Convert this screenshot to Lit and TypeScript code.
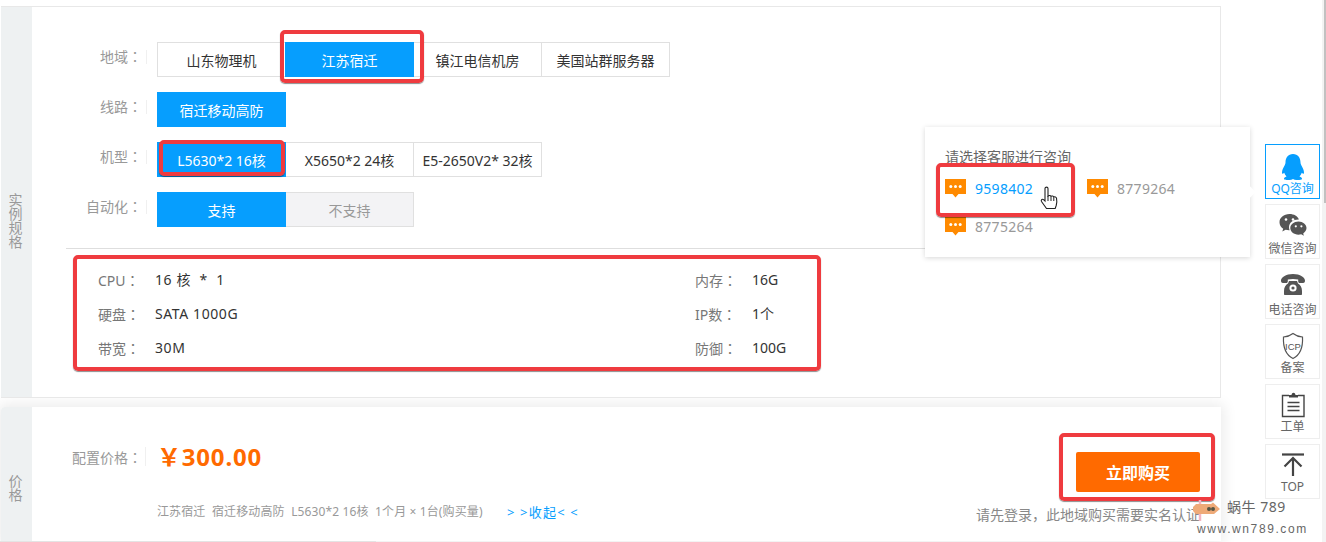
import { LitElement, html, css, svg } from 'lit';
import { customElement } from 'lit/decorators.js';
import { classMap } from 'lit/directives/class-map.js';

type Option = { label: string; on?: boolean; off?: boolean };

const ROWS: { label: string; options: Option[] }[] = [
  {
    label: '地域',
    options: [{ label: '山东物理机' }, { label: '江苏宿迁', on: true }, { label: '镇江电信机房' }, { label: '美国站群服务器' }]
  },
  { label: '线路', options: [{ label: '宿迁移动高防', on: true }] },
  {
    label: '机型',
    options: [{ label: 'L5630*2 16核', on: true }, { label: 'X5650*2 24核' }, { label: 'E5-2650V2* 32核' }]
  },
  { label: '自动化', options: [{ label: '支持', on: true }, { label: '不支持', off: true }] }
];

const SPECS = [
  ['CPU', '16 核  *  1', '内存', '16G'],
  ['硬盘', 'SATA 1000G', 'IP数', '1个'],
  ['带宽', '30M', '防御', '100G']
];

const ICONS = {
  qq: svg`<path d="M15 2c-5 0-7.500 3.800-7.500 8.500 0 1-.2 1.700-.8 2.800C5.200 16 4 18.500 4 20.500c0 1.500.8 1.800 2.200.3.500 1.600 1.300 2.800 2.300 3.700-1.500.6-2.500 1.300-2.500 2.300C6 28 9 28 11.500 28c1.400 0 2.600-.4 3.500-1 .9.600 2.100 1 3.500 1 2.500 0 5.500 0 5.500-1.200 0-1-1-1.700-2.500-2.300 1-.9 1.800-2.100 2.300-3.700 1.400 1.500 2.200 1.200 2.200-.3 0-2-1.200-4.500-2.700-7.200-.6-1.100-.8-1.800-.8-2.800C22.500 5.800 20 2 15 2z" fill="#069efe"/>`,
  wechat: svg`<path d="M11.500 2C5.700 2 1.500 5.700 1.500 10.300c0 2.700 1.400 4.900 3.700 6.400l-.9 2.900 3.300-1.800c1.100.3 2.200.5 3.400.5h.6c-.4-1-.6-2-.6-3 0-4.500 4-7.800 9.300-7.800h.6C19.700 4.200 16 2 11.500 2z" fill="#555"/><path d="M20.500 9.500c-4.700 0-8.200 3-8.200 6.600s3.500 6.600 8.200 6.600c.9 0 1.800-.1 2.700-.4l2.700 1.500-.7-2.400c1.900-1.200 3.300-3.200 3.300-5.300 0-3.600-3.500-6.600-8-6.600z" fill="#555"/><circle cx="8" cy="7.500" r="1.300" fill="#fff"/><circle cx="15" cy="7.500" r="1.300" fill="#fff"/><circle cx="17.800" cy="14.300" r="1.100" fill="#fff"/><circle cx="23.400" cy="14.300" r="1.100" fill="#fff"/>`,
  phone: svg`<path d="M3 9C2.500 5.500 8 2 15 2s12.500 3.500 12 7c-.1 1.200-.8 2-1.800 2h-3.400c-1 0-1.600-.8-1.600-1.800V7.500c-3-.8-7.400-.8-10.400 0v1.700c0 1-.6 1.800-1.600 1.800H4.800C3.800 11 3.100 10.200 3 9z" fill="#555"/><path d="M11 9h8l1 2.500c2.500 1.500 4 4 4 7.500v3c0 .6-.4 1-1 1H7c-.6 0-1-.4-1-1v-3c0-3.500 1.500-6 4-7.500z" fill="#555"/><circle cx="15" cy="16" r="3.600" fill="#fff"/><circle cx="15" cy="16" r="1.600" fill="#555"/>`,
  icp: svg`<path d="M15 1.500c3 2.300 6 3.400 9.500 3.500.5 9.500-1.500 17.500-9.500 21.500C7 22.500 5 14.500 5.500 5 9 4.900 12 3.800 15 1.500z" fill="none" stroke="#555" stroke-width="1.200"/><text x="15" y="17.500" text-anchor="middle" font-size="9.500" fill="#555" font-family="Liberation Sans, sans-serif">ICP</text>`,
  order: svg`<path d="M11 3.500H4.500v21h21.500v-21H20" fill="none" stroke="#444" stroke-width="1.400"/><path d="M11 5.500V3h2.500c.3-1.500 1-2.300 2-2.300s1.700.8 2 2.300H20v2.500z" fill="#444"/><path d="M9.500 10.500h12M9.500 14.500h12M9.500 18.500h12" stroke="#444" stroke-width="1.300"/>`,
  top: svg`<path d="M4 2.500h22" stroke="#444" stroke-width="2.200"/><path d="M15 24V6M6.500 14.500L15 6l8.500 8.500" fill="none" stroke="#444" stroke-width="2.200"/>`
};

const RAIL = [
  { icon: ICONS.qq, label: 'QQ咨询', nudge: 0, active: true },
  { icon: ICONS.wechat, label: '微信咨询', nudge: 0 },
  { icon: ICONS.phone, label: '电话咨询', nudge: 1 },
  { icon: ICONS.icp, label: '备案', nudge: -1 },
  { icon: ICONS.order, label: '工单', nudge: -2 },
  { icon: ICONS.top, label: 'TOP', nudge: -2 }
];

const chat = html`<svg class="chat" width="21" height="19" viewBox="0 0 21 19">
  <path d="M0 0h21v15h-7.500L10.500 18.500 7.500 15H0z" fill="#ff8a00"/>
  <circle cx="5.800" cy="7.500" r="1.500" fill="#fff"/><circle cx="10.500" cy="7.500" r="1.500" fill="#fff"/><circle cx="15.200" cy="7.500" r="1.500" fill="#fff"/>
</svg>`;

const colon = html`<span class="colon">：</span>`;

@customElement('app-root')
export class AppRoot extends LitElement {
  static styles = css`
    :host {
      display: block;
      position: relative;
      width: 1326px;
      height: 542px;
      overflow: hidden;
      background: #fff;
      color: #333;
      font-family: 'Noto Sans', 'Noto Sans CJK SC', sans-serif;
      font-size: 14px;
    }
    .page {
      display: flex;
      height: 542px;
    }
    .main {
      display: flex;
      flex-direction: column;
      width: 1221px;
      flex: none;
    }
    .colon {
      font-family: 'Noto Sans CJK TC', sans-serif;
    }
    .card {
      display: flex;
      margin-left: 1px;
      background: #fff;
    }
    .spec-card {
      height: 392px;
      margin-top: 6px;
      border: 1px solid #e8e8e8;
      border-width: 1px 1px 1px 0;
      box-sizing: border-box;
      margin-bottom: 9px;
      z-index: 1;
    }
    .price-card {
      height: 134px;
      border-top-left-radius: 4px;
      box-shadow: 0 0 14px 3px rgba(0, 0, 0, 0.08);
    }
    .foot {
      width: 376px;
      height: 1px;
      background: #e4e4e4;
      z-index: 1;
    }
    .strip {
      width: 31px;
      flex: none;
      box-sizing: border-box;
      background: #eef1f2;
      color: #999;
      font-size: 14px;
      line-height: 14px;
      text-align: center;
      padding: 0 9px 0 7px;
    }
    .spec-card .strip {
      padding-top: 186px;
    }
    .price-card .strip {
      padding-top: 67px;
      border-top-left-radius: 4px;
    }
    .body {
      flex: 1;
      min-width: 0;
    }
    .spec-card .body {
      padding-top: 35px;
    }
    .row {
      display: flex;
      height: 35px;
      margin-bottom: 15px;
    }
    .label {
      width: 115px;
      box-sizing: border-box;
      text-align: right;
      color: #999;
      padding-right: 5px;
      line-height: 28px;
      flex: none;
      margin-right: 10px;
      background: linear-gradient(#f0f0f0, #f0f0f0) right 8px / 1px 14px no-repeat;
    }
    .options {
      display: flex;
    }
    .opt {
      width: 129px;
      height: 35px;
      box-sizing: border-box;
      border: 1px solid #e0e0e0;
      margin-left: -1px;
      line-height: 35px;
      text-align: center;
      white-space: nowrap;
      background: #fff;
      color: #333;
    }
    .opt:first-child {
      margin-left: 0;
    }
    .opt.on {
      background: #069efe;
      border-color: #069efe;
      color: #fff;
      z-index: 1;
    }
    .opt.off {
      background: #f3f3f5;
      color: #999;
    }
    .divider {
      height: 1px;
      margin: 21px 0 0 34px;
      background: #dedede;
    }
    .specs {
      display: grid;
      grid-template-columns: 57px 540px 57px 1fr;
      grid-auto-rows: 34px;
      padding: 14px 0 0 66px;
      line-height: 34px;
      white-space: pre;
    }
    .specs .k {
      color: #777;
    }
    .specs .wide {
      letter-spacing: 0.6px;
    }
    .price-body {
      padding-top: 33px;
      position: relative;
    }
    .price-row {
      display: flex;
      height: 34px;
      line-height: 34px;
    }
    .price-row .k {
      flex: none;
      box-sizing: border-box;
      width: 114px;
      margin-right: 11px;
      padding-right: 4px;
      text-align: right;
      color: #999;
      background: linear-gradient(#f0f0f0, #f0f0f0) right 7px / 1px 19px no-repeat;
    }
    .price {
      font-size: 24px;
      font-weight: 700;
      color: #ff6a00;
      letter-spacing: 0.8px;
    }
    .summary {
      display: flex;
      margin: 28px 0 0 125px;
      font-size: 12px;
      line-height: 20px;
      color: #999;
      letter-spacing: 0.12px;
      white-space: pre;
    }
    .summary a {
      color: #069efe;
      margin-left: 21px;
      font-size: 13px;
      letter-spacing: 1.2px;
    }
    .buy {
      position: absolute;
      left: 1044px;
      top: 45px;
      width: 124px;
      height: 40px;
      background: #ff6a00;
      border-radius: 2px;
      color: #fff;
      font: 700 16px/40px 'Noto Sans CJK SC', sans-serif;
      text-align: center;
    }
    .hint {
      position: absolute;
      left: 944px;
      top: 98px;
      color: #888;
      line-height: 20px;
      white-space: nowrap;
    }
    .rail {
      display: flex;
      flex-direction: column;
      gap: 5px;
      width: 55px;
      margin: 144px 0 0 44px;
      flex: none;
    }
    .tool {
      width: 55px;
      height: 55px;
      box-sizing: border-box;
      border: 1px solid #eee;
      background: #fff;
      color: #666;
      font-size: 12px;
      line-height: 14px;
      text-align: center;
      padding-top: 7px;
    }
    .tool svg {
      display: block;
      margin: 0 auto;
    }
    .tool.active {
      border-color: #069efe;
      color: #069efe;
    }
    .scroll {
      width: 4px;
      margin-left: 2px;
      flex: none;
      background: #f3f3f3;
    }
    .scroll div {
      height: 203px;
      margin-left: 2px;
      background: #c1c1c1;
    }
    .popup {
      position: absolute;
      z-index: 5;
      left: 925px;
      top: 127px;
      width: 325px;
      height: 130px;
      box-sizing: border-box;
      padding: 20px 20px 0;
      background: #fff;
      box-shadow: 0 1px 5px rgba(0, 0, 0, 0.16);
    }
    .popup:after {
      content: '';
      position: absolute;
      right: -4px;
      top: 61px;
      width: 8px;
      height: 8px;
      background: #fff;
      transform: rotate(45deg);
    }
    .popup h4 {
      margin: 0;
      font-weight: 400;
      font-size: 14px;
      line-height: 20px;
      color: #666;
    }
    .agents {
      display: flex;
      flex-wrap: wrap;
      width: 284px;
      margin-top: 2px;
    }
    .agent {
      display: flex;
      align-items: center;
      width: 142px;
      height: 38px;
      color: #999;
      letter-spacing: 0.3px;
    }
    .agent.hot {
      color: #069efe;
    }
    .chat {
      margin-right: 9px;
      flex: none;
    }
    .mark {
      position: absolute;
      z-index: 6;
      box-sizing: border-box;
      border: 4px solid #ef3b3f;
      border-radius: 5px;
      box-shadow: 0 1px 1px rgba(0, 0, 0, 0.45);
    }
    .hand {
      position: absolute;
      z-index: 7;
      left: 1040px;
      top: 186px;
    }
    .watermark {
      position: absolute;
      z-index: 7;
      left: 1192px;
      top: 497px;
      width: 124px;
      height: 42px;
      color: #666;
    }
    .watermark .cn {
      position: absolute;
      left: 35px;
      top: 0;
      font-size: 14px;
      line-height: 20px;
      letter-spacing: 0.5px;
      white-space: pre;
    }
    .watermark .url {
      position: absolute;
      left: 5px;
      top: 25px;
      font: 12px/14px 'Liberation Sans', sans-serif;
      letter-spacing: 1.6px;
      white-space: nowrap;
    }
    .watermark svg {
      position: absolute;
      left: 0;
      top: 2px;
    }
  `;

  render() {
    return html`
      <div class="page">
        <div class="main">
          <section class="card spec-card">
            <div class="strip">实例规格</div>
            <div class="body">
              ${ROWS.map(
                (row) => html`<div class="row">
                  <div class="label">${row.label}${colon}</div>
                  <div class="options">
                    ${row.options.map(
                      (o) => html`<div class=${classMap({ opt: true, on: !!o.on, off: !!o.off })}>${o.label}</div>`
                    )}
                  </div>
                </div>`
              )}
              <div class="divider"></div>
              <div class="specs">
                ${SPECS.map(
                  (s) => html`<span class="k">${s[0]}${colon}</span><span class="wide">${s[1]}</span><span class="k">${s[2]}${colon}</span><span>${s[3]}</span>`
                )}
              </div>
            </div>
          </section>
          <section class="card price-card">
            <div class="strip">价格</div>
            <div class="body price-body">
              <div class="price-row">
                <span class="k">配置价格${colon}</span>
                <span class="price">￥300.00</span>
              </div>
              <div class="summary">江苏宿迁  宿迁移动高防  L5630*2 16核  1个月 × 1台(购买量) <a>&gt; &gt;收起&lt; &lt;</a></div>
              <div class="buy">立即购买</div>
              <div class="hint">请先登录，此地域购买需要实名认证</div>
            </div>
          </section>
          <div class="foot"></div>
        </div>
        <nav class="rail">
          ${RAIL.map(
            (t) => html`<div class=${classMap({ tool: true, active: !!t.active })}>
              <svg width="30" height="30" viewBox="0 0 30 30" style="margin-bottom:${t.nudge}px">${t.icon}</svg>${t.label}
            </div>`
          )}
        </nav>
        <div class="scroll"><div></div></div>
      </div>

      <div class="popup">
        <h4>请选择客服进行咨询</h4>
        <div class="agents">
          <div class="agent hot">${chat}9598402</div>
          <div class="agent">${chat}8779264</div>
          <div class="agent">${chat}8775264</div>
        </div>
      </div>

      <div class="mark" style="left:280px;top:30px;width:144px;height:53px"></div>
      <div class="mark" style="left:159px;top:140px;width:126px;height:36px"></div>
      <div class="mark" style="left:73px;top:255px;width:748px;height:116px"></div>
      <div class="mark" style="left:936px;top:163px;width:139px;height:54px"></div>
      <div class="mark" style="left:1059px;top:433px;width:156px;height:68px"></div>

      <svg class="hand" width="20" height="26" viewBox="0 0 20 26">
        <path d="M5 2.500c0-1.800 3-1.800 3 0V10c1-.8 2.500-.6 3 .3 1-.6 2.300-.3 2.800.7 1-.5 2.400 0 2.700 1.200.4 2 .4 5-.3 7.300l-1 3H6.500L1.500 15.500c-.9-1.800 1-3 2.300-1.700L5 15z" fill="#fff" stroke="#222" stroke-width="1.100"/>
        <path d="M8 10v5M11 10.500V15M13.800 11.200V15" stroke="#222"/>
      </svg>

      <div class="watermark">
        <svg width="32" height="24" viewBox="0 0 32 24">
          <path d="M8 1v21" stroke="#f3b4c2" stroke-width="2.500"/>
          <path d="M1 8l3-3h15l2-1.500 7 6.500-6 5H4l-3-3z" fill="#eeaa78"/>
          <circle cx="17" cy="10" r="2" fill="#554"/><circle cx="21" cy="10" r="2" fill="#554"/>
        </svg>
        <span class="cn">蜗牛 789</span>
        <span class="url">www.wn789.com</span>
      </div>
    `;
  }
}
